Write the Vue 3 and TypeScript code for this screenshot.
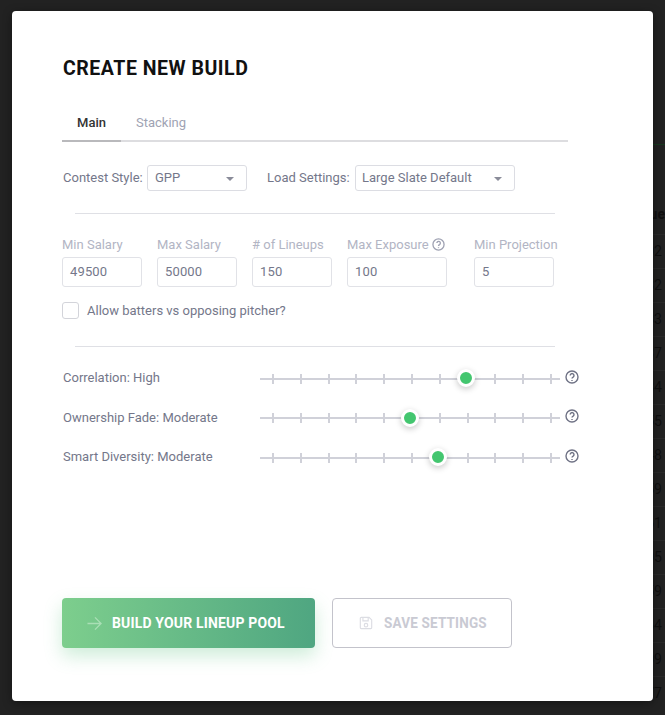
<script setup lang="ts">
const sliders = [
  { label: 'Correlation: High', pos: 206 },
  { label: 'Ownership Fade: Moderate', pos: 150 },
  { label: 'Smart Diversity: Moderate', pos: 178 },
]
const ticks = Array.from({ length: 11 }, (_, i) => i)
const fields = [
  { label: 'Min Salary', value: '49500', cls: 'w80' },
  { label: 'Max Salary', value: '50000', cls: 'w80' },
  { label: '# of Lineups', value: '150', cls: 'w80' },
  { label: 'Max Exposure', value: '100', cls: 'w100', help: true },
  { label: 'Min Projection', value: '5', cls: 'w80' },
]
const behindRows = ['02', '82', '83', '37', '84', '55', '48', '59', '61', '05', '59', '64', '09', '77']
</script>

<template>
  <div class="backdrop">
    <div class="behind">
      <div class="behind-accent"></div>
      <div class="behind-head">Value</div>
      <div v-for="(r, i) in behindRows" :key="i" class="behind-row">{{ r }}</div>
    </div>
    <main class="modal">
      <h1 class="title">CREATE NEW BUILD</h1>
      <nav class="tabs">
        <span class="tab active">Main</span>
        <span class="tab">Stacking</span>
      </nav>
      <section class="selects">
        <span class="sel-label">Contest Style:</span>
        <div class="select gpp"><span>GPP</span><i class="caret"></i></div>
        <span class="sel-label load">Load Settings:</span>
        <div class="select slate"><span>Large Slate Default</span><i class="caret"></i></div>
      </section>
      <hr class="divider first" />
      <section class="fields">
        <div v-for="f in fields" :key="f.label" class="field" :class="f.cls">
          <label class="field-label">
            {{ f.label }}
            <svg v-if="f.help" class="help small" viewBox="0 0 14 14">
              <circle cx="7" cy="7" r="6" />
              <path d="M5.2 5.5a1.9 1.9 0 1 1 2.9 1.6c-.7.4-1.1.8-1.1 1.5" />
              <path d="M7 10v.9" />
            </svg>
          </label>
          <div class="input">{{ f.value }}</div>
        </div>
      </section>
      <div class="check-row">
        <span class="checkbox"></span>
        <span>Allow batters vs opposing pitcher?</span>
      </div>
      <hr class="divider second" />
      <section class="sliders">
        <div v-for="s in sliders" :key="s.label" class="slider-row">
          <span class="slider-label">{{ s.label }}</span>
          <div class="track">
            <span v-for="t in ticks" :key="t" class="tick"></span>
            <span class="thumb" :style="{ left: s.pos + 'px' }"></span>
          </div>
          <svg class="help" viewBox="0 0 14 14">
            <circle cx="7" cy="7" r="6" />
            <path d="M5.2 5.5a1.9 1.9 0 1 1 2.9 1.6c-.7.4-1.1.8-1.1 1.5" />
            <path d="M7 10v.9" />
          </svg>
        </div>
      </section>
      <footer class="actions">
        <button class="btn primary">
          <svg class="arrow" viewBox="0 0 16 16">
            <path d="M0.5 8H15M8.5 1.5 15 8l-6.5 6.5" />
          </svg>
          <span class="btn-text build">BUILD YOUR LINEUP POOL</span>
        </button>
        <button class="btn secondary">
          <svg class="disk" viewBox="0 0 16 16">
            <path d="M1.5 2.5a1 1 0 0 1 1-1h9l3 3v9a1 1 0 0 1-1 1h-11a1 1 0 0 1-1-1z" />
            <path d="M4.5 1.5v4h6v-4" />
            <circle cx="8" cy="10.5" r="2" />
          </svg>
          <span class="btn-text save">SAVE SETTINGS</span>
        </button>
      </footer>
    </main>
  </div>
</template>

<style>
html, body { margin: 0; background: #222222; }
</style>

<style scoped>
.backdrop {
  position: relative;
  width: 665px;
  height: 715px;
  box-sizing: border-box;
  padding: 11px 12px 14px;
  background: #222222;
  overflow: hidden;
  font-family: Roboto, "Liberation Sans", sans-serif;
}
.behind {
  position: absolute;
  top: 144px;
  left: 600px;
  width: 65px;
  text-align: right;
  font-size: 14px;
  color: #101010;
}
.behind-accent { height: 1px; background: #17391f; }
.behind-head {
  height: 16px;
  padding: 61px 0 12px;
  line-height: 16px;
  font-weight: 700;
}
.behind-row {
  height: 33px;
  line-height: 32px;
  padding-right: 3px;
  border-top: 1px solid #2a2a2a;
}
.modal {
  position: relative;
  width: 641px;
  height: 690px;
  box-sizing: border-box;
  padding: 45px 50px 0;
  background: #fff;
  border-radius: 4px;
  box-shadow: 0 2px 10px rgba(0, 0, 0, .4);
}
.title {
  margin: 0 0 0 1px;
  font-size: 21px;
  line-height: 24px;
  font-weight: 700;
  color: #111;
  letter-spacing: 0.55px;
  transform: scaleX(.93);
  transform-origin: left center;
}
.tabs {
  display: flex;
  width: 506px;
  height: 32px;
  margin-top: 28px;
  border-bottom: 2px solid #dddde0;
}
.tab {
  width: 59px;
  box-sizing: border-box;
  padding-top: 7px;
  text-align: center;
  font-size: 13px;
  line-height: 16px;
  color: #a0a3b3;
  margin-bottom: -2px;
}
.tab.active {
  font-weight: 500;
  color: #333;
  border-bottom: 2px solid #b9b9bc;
}
.tab + .tab { margin-left: 5px; width: 70px; }
.selects {
  display: flex;
  align-items: center;
  height: 26px;
  margin-top: 23px;
  font-size: 13px;
  color: #74778a;
}
.sel-label { margin: 0 0 2px 1px; width: 84px; }
.sel-label.load { margin-left: 20px; width: 88px; }
.select {
  display: flex;
  align-items: center;
  justify-content: space-between;
  box-sizing: border-box;
  height: 26px;
  padding: 0 12px 2px 7px;
  border: 1px solid #dcdde3;
  border-radius: 3px;
  color: #74778a;
}
.select.gpp { width: 100px; }
.select.slate { width: 160px; padding-left: 6px; }
.caret {
  width: 0;
  height: 0;
  border-left: 4px solid transparent;
  border-right: 4px solid transparent;
  border-top: 4px solid #8a8c99;
  margin-top: 4px;
}
.divider {
  height: 1px;
  width: 480px;
  margin: 0 0 0 13px;
  border: 0;
  background: #dfe0e5;
}
.divider.first { margin-top: 22px; }
.divider.second { margin-top: 27px; }
.fields {
  display: flex;
  margin-top: 23px;
}
.field { margin-right: 15px; flex: none; }
.field:nth-child(4) { margin-right: 27px; }
.field.w80 { width: 80px; }
.field.w100 { width: 100px; }
.field-label {
  display: flex;
  align-items: center;
  gap: 3px;
  height: 15px;
  margin-bottom: 5px;
  font-size: 13px;
  line-height: 15px;
  white-space: nowrap;
  color: #b2b5c4;
}
.input {
  box-sizing: border-box;
  height: 30px;
  padding: 0 7px;
  line-height: 28px;
  font-size: 13px;
  letter-spacing: .15px;
  color: #74778a;
  border: 1px solid #e1e2e7;
  border-radius: 3px;
}
.check-row {
  display: flex;
  align-items: center;
  gap: 8px;
  height: 17px;
  margin-top: 15px;
  font-size: 13px;
  color: #74778a;
}
.checkbox {
  box-sizing: border-box;
  width: 17px;
  height: 17px;
  border: 1px solid #d3d4da;
  border-radius: 3px;
}
.sliders {
  display: flex;
  flex-direction: column;
  gap: 24.5px;
  margin-top: 23px;
}
.slider-row {
  display: flex;
  align-items: center;
  height: 15px;
}
.slider-label {
  width: 197px;
  margin-left: 1px;
  font-size: 13px;
  color: #74778a;
  white-space: nowrap;
}
.track {
  position: relative;
  display: flex;
  align-items: center;
  justify-content: space-between;
  box-sizing: border-box;
  width: 300px;
  height: 10px;
  margin-top: 2px;
  padding: 0 8px 0 12px;
  background: linear-gradient(#d0d1d9, #d0d1d9) center / 100% 2px no-repeat;
}
.tick { width: 2px; height: 10px; background: #d0d1d9; }
.thumb {
  position: absolute;
  top: 50%;
  width: 12px;
  height: 12px;
  margin: -9.5px 0 0 -9.5px;
  background: #43c66f;
  border: 3.5px solid #fff;
  border-radius: 50%;
  box-shadow: 0 2px 6px rgba(0, 0, 0, .22);
}
.help {
  width: 14px;
  height: 14px;
  margin: -2px 0 0 5px;
  fill: none;
  stroke: #6f7285;
  stroke-width: 1.4;
}
.help.small {
  width: 13px;
  height: 13px;
  margin: 0;
  stroke: #9ea1b2;
}
.actions {
  display: flex;
  gap: 17px;
  margin-top: 134px;
}
.btn {
  display: flex;
  align-items: center;
  box-sizing: border-box;
  height: 50px;
  padding: 0;
  font-family: Roboto, "Liberation Sans", sans-serif;
  font-size: 15px;
  font-weight: 700;
  letter-spacing: .2px;
  border-radius: 4px;
  white-space: nowrap;
}
.btn-text { transform-origin: left center; }
.btn-text.build { transform: scaleX(.93); }
.btn-text.save { transform: scaleX(.9); }
.primary {
  width: 253px;
  padding-left: 25px;
  gap: 10px;
  color: #fff;
  border: 0;
  background: linear-gradient(90deg, #7dce8d, #4fa681);
  box-shadow: 0 8px 18px rgba(80, 190, 120, .28);
}
.secondary {
  width: 180px;
  padding-left: 26px;
  gap: 11px;
  color: #c9cad3;
  background: #fff;
  border: 1px solid #c3c3cb;
}
.arrow {
  width: 15px;
  height: 15px;
  fill: none;
  stroke: #a9dfb5;
  stroke-width: 1.4;
}
.disk {
  width: 14px;
  height: 14px;
  fill: none;
  stroke: #dcdde3;
  stroke-width: 1.3;
}
</style>
